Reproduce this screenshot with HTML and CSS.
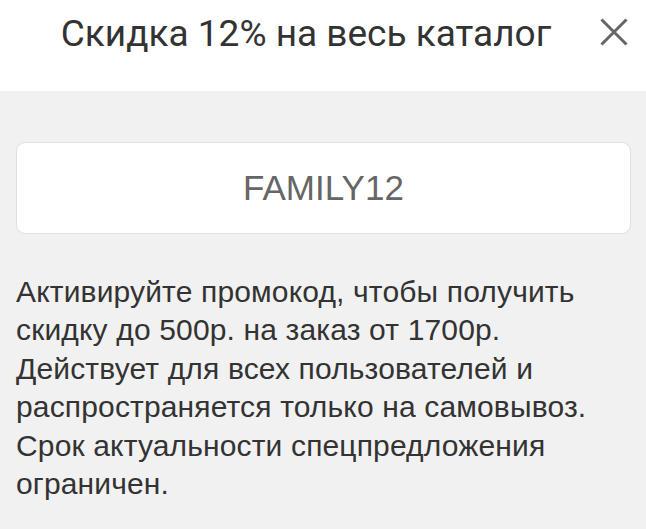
FILE: index.html
```html
<!DOCTYPE html>
<html lang="ru">
<head>
  <meta charset="UTF-8">
  <title>Скидка 12% на весь каталог</title>
  <meta name="viewport" content="width=device-width, initial-scale=1.0">
  <link rel="stylesheet" href="styles.css">
</head>
<body>
  <div class="promo-sheet">
    <div class="promo-header">
      <div class="promo-title">Скидка 12% на весь каталог</div>
      <button class="close-btn" aria-label="Закрыть">
        <svg width="28" height="28" viewBox="0 0 28 28">
          <path d="M1.5 1.5 L26.5 26.5 M26.5 1.5 L1.5 26.5" stroke="#666" stroke-width="3" fill="none"/>
        </svg>
      </button>
    </div>
    <div class="promo-body">
      <div class="promo-code">FAMILY12</div>
      <p class="promo-text">Активируйте промокод, чтобы получить скидку до 500р. на заказ от 1700р. Действует для всех пользователей и распространяется только на самовывоз. Срок актуальности спецпредложения ограничен.</p>
    </div>
  </div>
</body>
</html>
```

FILE: styles.css
```css
body {
  margin: 0;
  background: #f1f1f1;
  font-family: 'Liberation Sans', Arial, sans-serif;
  color: #333;
}
.promo-sheet {
  min-height: 100vh;
  display: flex;
  flex-direction: column;
}
.promo-header {
  background: #fff;
  height: 91px;
  display: flex;
  align-items: flex-start;
  padding: 0 18px 0 0;
}
.promo-title {
  flex: 1;
  padding: 12px 0 0 12px;
  text-align: center;
  font-family: Roboto, sans-serif;
  font-size: 37px;
  line-height: 44px;
  color: #333;
}
.close-btn {
  background: none;
  border: none;
  padding: 0;
  margin-top: 18px;
  width: 28px;
  height: 28px;
  cursor: pointer;
}
.close-btn svg {
  display: block;
}
.promo-body {
  padding: 51px 15px 0 16px;
}
.promo-code {
  background: #fff;
  border: 1.5px solid #e0e0e0;
  border-radius: 9px;
  height: 90px;
  display: flex;
  align-items: center;
  justify-content: center;
  font-size: 35px;
  color: #666;
}
.promo-text {
  margin: 39px 0 0 0;
  font-size: 30px;
  line-height: 38.4px;
  letter-spacing: 0.15px;
  color: #333;
}
```
